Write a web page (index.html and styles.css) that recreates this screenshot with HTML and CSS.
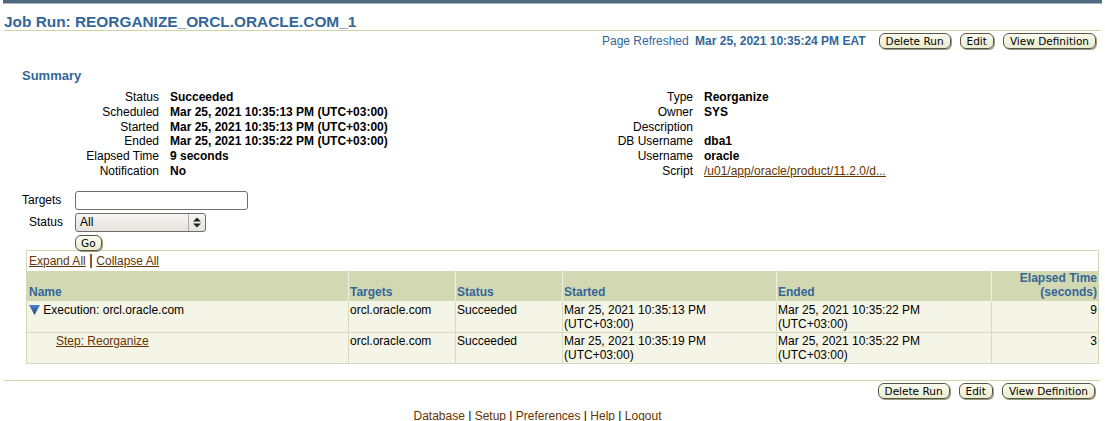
FILE: index.html
```html
<!DOCTYPE html>
<html>
<head>
<meta charset="utf-8">
<link rel="stylesheet" href="styles.css">
</head>
<body>
<div class="topbar"></div>
<h1 class="title">Job Run: REORGANIZE_ORCL.ORACLE.COM_1</h1>
<div class="actions">
  <span class="refreshed">Page Refreshed <b>Mar 25, 2021 10:35:24 PM EAT</b></span>
  <span class="btn">Delete Run</span>
  <span class="btn">Edit</span>
  <span class="btn">View Definition</span>
</div>
<h2 class="summary-h">Summary</h2>
<div class="summary">
  <div class="kv left">
    <span class="k">Status</span><span class="v">Succeeded</span>
    <span class="k">Scheduled</span><span class="v">Mar 25, 2021 10:35:13 PM (UTC+03:00)</span>
    <span class="k">Started</span><span class="v">Mar 25, 2021 10:35:13 PM (UTC+03:00)</span>
    <span class="k">Ended</span><span class="v">Mar 25, 2021 10:35:22 PM (UTC+03:00)</span>
    <span class="k">Elapsed Time</span><span class="v">9 seconds</span>
    <span class="k">Notification</span><span class="v">No</span>
  </div>
  <div class="kv right">
    <span class="k">Type</span><span class="v">Reorganize</span>
    <span class="k">Owner</span><span class="v">SYS</span>
    <span class="k">Description</span><span class="v"></span>
    <span class="k">DB Username</span><span class="v">dba1</span>
    <span class="k">Username</span><span class="v">oracle</span>
    <span class="k">Script</span><span class="v"><a href="#" class="link">/u01/app/oracle/product/11.2.0/d...</a></span>
  </div>
</div>
<div class="filters">
  <label class="flabel">Targets</label><span class="input"></span>
  <label class="flabel">Status</label><span class="select"><span>All</span><span class="arrows"><svg width="8" height="11" viewBox="0 0 8 11"><path d="M0 4.5L4 0.5L8 4.5Z M0 6.5L4 10.5L8 6.5Z" fill="#222"/></svg></span></span>
  <span></span><span class="btn go">Go</span>
</div>
<div class="tablebox">
  <div class="expand"><a href="#" class="link">Expand All</a> <span class="sep">|</span> <a href="#" class="link">Collapse All</a></div>
  <table class="grid">
    <thead>
      <tr>
        <th class="c-name">Name</th>
        <th class="c-tg">Targets</th>
        <th class="c-st">Status</th>
        <th class="c-s">Started</th>
        <th class="c-e">Ended</th>
        <th class="c-el">Elapsed Time<br>(seconds)</th>
      </tr>
    </thead>
    <tbody>
      <tr>
        <td><svg class="tri" width="11" height="11" viewBox="0 0 11 11"><defs><linearGradient id="tg" x1="0" y1="0" x2="0" y2="1"><stop offset="0" stop-color="#4a7fbf"/><stop offset="1" stop-color="#1d4a80"/></linearGradient></defs><path d="M0 1H11L5.5 11Z" fill="url(#tg)"/></svg> Execution: orcl.oracle.com</td>
        <td>orcl.oracle.com</td>
        <td>Succeeded</td>
        <td>Mar 25, 2021 10:35:13 PM<br>(UTC+03:00)</td>
        <td>Mar 25, 2021 10:35:22 PM<br>(UTC+03:00)</td>
        <td class="num">9</td>
      </tr>
      <tr>
        <td class="step"><a href="#" class="link">Step: Reorganize</a></td>
        <td>orcl.oracle.com</td>
        <td>Succeeded</td>
        <td>Mar 25, 2021 10:35:19 PM<br>(UTC+03:00)</td>
        <td>Mar 25, 2021 10:35:22 PM<br>(UTC+03:00)</td>
        <td class="num">3</td>
      </tr>
    </tbody>
  </table>
</div>
<div class="bottom-actions">
  <span class="btn">Delete Run</span>
  <span class="btn">Edit</span>
  <span class="btn">View Definition</span>
</div>
<div class="footer">
  <a href="#" class="flink">Database</a> | <a href="#" class="flink">Setup</a> | <a href="#" class="flink">Preferences</a> | <a href="#" class="flink">Help</a> | <a href="#" class="flink">Logout</a>
</div>
</body>
</html>
```
FILE: styles.css
```css
body {
  margin: 0;
  font-family: "Liberation Sans", Arial, sans-serif;
  font-size: 12px;
  color: #000;
  background: #fff;
}
.topbar {
  height: 3px;
  margin: 0 3px 0 3px;
  background: #4e6a82;
  border-bottom: 1px solid #a9b4be;
}
.title {
  margin: 9px 5px 0 4px;
  padding-bottom: 0;
  font-size: 15.4px;
  font-weight: bold;
  color: #336699;
  border-bottom: 1px solid #ccd4a6;
  line-height: 17px;
}
.actions {
  display: flex;
  justify-content: flex-end;
  align-items: center;
  gap: 9px;
  margin: 2px 9px 0 0;
  height: 16px;
}
.refreshed {
  color: #336699;
  margin-right: 4px;
}
.refreshed b { margin-left: 3px; }
.btn {
  display: inline-block;
  font-family: "DejaVu Sans", sans-serif;
  font-size: 10.5px;
  line-height: 14px;
  padding: 0 6px;
  border: 1px solid #55554a;
  border-radius: 6px;
  background: linear-gradient(#fbfbef, #ebebcf);
  color: #000;
  box-shadow: 1px 1px 0 #9b9b80;
}
.summary-h {
  margin: 19px 0 0 22px;
  font-size: 13px;
  color: #336699;
  font-weight: bold;
  line-height: 16px;
}
.summary {
  display: flex;
  margin-top: 6px;
}
.kv {
  display: grid;
  grid-template-columns: auto auto;
  column-gap: 11px;
  align-content: start;
  line-height: 14.8px;
}
.kv .k { text-align: right; }
.kv .v { font-weight: bold; }
.kv.left { grid-template-columns: 159px 1fr; margin-left: 0; width: 604px; }
.kv.right { grid-template-columns: 89px auto; }
.link {
  color: #663300;
  text-decoration: underline;
}
.flink {
  color: #663300;
  text-decoration: none;
}
.kv .v .link { font-weight: normal; }
.filters {
  display: grid;
  grid-template-columns: 53px auto;
  row-gap: 3px;
  margin-top: 12px;
  margin-left: 22px;
  align-items: center;
  justify-items: start;
}
.flabel { line-height: 19px; }
.filters label:nth-of-type(2) { padding-left: 7px; }
.input {
  display: block;
  width: 171px;
  height: 17px;
  border: 1px solid #6e6e6e;
  border-radius: 3px;
  background: #fff;
}
.select {
  display: flex;
  justify-content: space-between;
  align-items: center;
  height: 17px;
  border: 1px solid #6e6e6e;
  border-radius: 3px;
  background: linear-gradient(#f6f5f2, #e5e3de);
  padding-left: 4px;
  box-sizing: content-box;
  width: 125px;
}
.arrows {
  display: flex;
  align-items: center;
  justify-content: center;
  width: 16px;
  height: 17px;
  border-left: 1px solid #aaa;
}
.btn.go {
  padding: 0 5px;
}
.tablebox {
  margin: -1px 6px 0 26px;
  border: 1px solid #d2d8b4;
  border-bottom: none;
}
.expand {
  padding: 2px 2px 0 2px;
  line-height: 14px;
  height: 18px;
}
.sep { font-size: 15px; line-height: 14px; }
.grid {
  width: 100%;
  border-collapse: collapse;
}
.grid th {
  background: #d2d8b1;
  color: #336699;
  font-weight: bold;
  text-align: left;
  vertical-align: bottom;
  padding: 0 1px 2px 1px;
  height: 26px;
  line-height: 14px;
  border-left: 1px solid #eef0dd;
  border-bottom: 1px solid #f4f5e6;
}
.grid th:first-child { border-left: none; }
.grid td {
  background: #f4f5e6;
  vertical-align: top;
  padding: 1px 1px 0 1px;
  line-height: 14px;
  height: 29px;
  border-left: 1px solid #d6dbbd;
  border-bottom: 1px solid #d6dbbd;
}
.grid td:first-child { border-left: none; padding-left: 2px; }
.grid th:first-child { padding-left: 2px; }
.grid th.c-el, .grid td.num { text-align: right; }
.c-name { width: 318px; }
.c-tg { width: 104px; }
.c-st { width: 104px; }
.c-s { width: 211px; }
.c-e { width: 212px; }
.tri { vertical-align: -1px; }
.grid td.step { padding-left: 29px; }
.bottom-actions {
  display: flex;
  justify-content: flex-end;
  gap: 9px;
  margin: 16px 5px 0 4px;
  padding: 2px 5px 0 0;
  border-top: 1px solid #ccd4a6;
}
.footer {
  text-align: center;
  margin-top: 10px;
  padding-right: 30px;
}
```
